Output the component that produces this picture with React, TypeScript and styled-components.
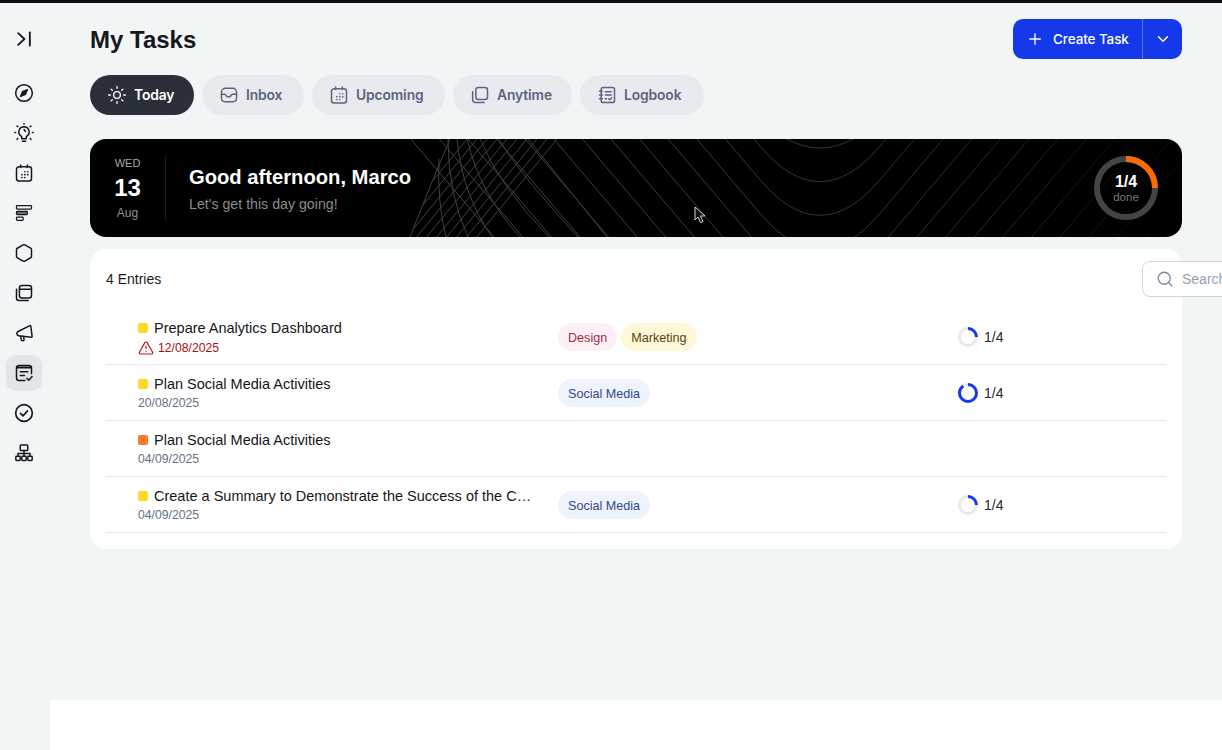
import React from 'react';
import styled, { createGlobalStyle } from 'styled-components';
import { Hexagon, Sun, Plus, ChevronDown, Search, TriangleAlert } from 'lucide-react';

const Global = createGlobalStyle`
  html, body { margin: 0; padding: 0; height: 100%; overflow: hidden; background: #f1f5f6; }
  * { box-sizing: border-box; }
  #root { height: 100%; }
`;

const Shell = styled.div`
  width: 1222px; height: 750px; display: grid; grid-template-columns: 50px 1fr;
  border-top: 3px solid #0b1012; background: #f1f5f6; overflow: hidden;
  font-family: "Liberation Sans", Arial, sans-serif;
`;
const Sidebar = styled.nav`
  display: flex; flex-direction: column; align-items: center; padding: 18px 2px 0 0;
`;
const NavToggle = styled.div`
  width: 36px; height: 36px; display: flex; align-items: center; justify-content: center; color: #15191e; margin-bottom: 18px;
`;
const NavList = styled.div`
  display: flex; flex-direction: column; gap: 4px;
`;
const NavItem = styled.div<{ $active?: boolean }>`
  width: 36px; height: 36px; border-radius: 10px; display: flex; align-items: center; justify-content: center;
  color: #15191e; background: ${p => (p.$active ? '#e2e6e8' : 'transparent')};
`;
const Main = styled.div`
  display: flex; flex-direction: column; min-width: 0;
`;
const Content = styled.main`
  flex: 1; padding: 16px 40px 0; min-height: 0;
`;
const Footer = styled.div`
  height: 50px; background: #ffffff; flex: none;
`;
const Header = styled.header`
  height: 40px; display: flex; align-items: center; justify-content: space-between;
`;
const Title = styled.h1`
  margin: 1px 0 0; font: 700 24px/40px "Liberation Sans", Arial, sans-serif; color: #15171c;
`;
const SplitButton = styled.div`
  display: flex; height: 40px; border-radius: 10px; background: #1438ea; color: #fff; overflow: hidden;
`;
const MainAction = styled.div`
  width: 130px; display: flex; align-items: center; padding-left: 13px; gap: 9px;
  font: 500 13.5px "Inter", sans-serif; letter-spacing: -0.1px; border-right: 1px solid #5a74ee;
`;
const MenuAction = styled.div`
  width: 39px; display: flex; align-items: center; justify-content: center;
`;
const Tabs = styled.div`
  display: flex; gap: 8px; margin-top: 16px;
`;
const Tab = styled.div<{ $active?: boolean; $w: number }>`
  width: ${p => p.$w}px; height: 40px; border-radius: 20px; display: flex; align-items: center; gap: 7px; padding-left: 17px;
  font: 600 13.8px "Inter", sans-serif; letter-spacing: -0.1px;
  background: ${p => (p.$active ? '#2b2f3a' : '#e8eaee')};
  color: ${p => (p.$active ? '#ffffff' : '#5b6480')};
`;
const Banner = styled.section`
  position: relative; margin-top: 24px; height: 98px; border-radius: 16px; background: #000; overflow: hidden;
  display: flex; align-items: center; color: #fff;
`;
const BannerArt = styled.svg`
  position: absolute; inset: 0; width: 1092px; height: 98px;
`;
const DateCol = styled.div`
  position: relative; width: 76px; height: 66px; display: flex; flex-direction: column; align-items: center; justify-content: space-between;
  border-right: 1px solid #1d1d1d; flex: none;
`;
const DateDay = styled.div`
  font-size: 11px; line-height: 16px; color: #a9a9a9;
`;
const DateNum = styled.div`
  font-size: 24px; font-weight: 700; line-height: 26px; color: #fff;
`;
const DateMonth = styled.div`
  font-size: 12px; line-height: 16px; color: #8f8f8f;
`;
const Greeting = styled.div`
  position: relative; margin: 2px 0 0 23px; flex: 1;
`;
const Hello = styled.div`
  font-size: 20.2px; font-weight: 700; line-height: 24px; color: #fff;
`;
const Sub = styled.div`
  margin-top: 6px; font-size: 14.2px; line-height: 18px; color: #8c8c8c;
`;
const DoneRing = styled.div`
  position: relative; width: 64px; height: 64px; margin-right: 24px; flex: none;
`;
const DoneText = styled.div`
  position: absolute; inset: 0; display: flex; flex-direction: column; align-items: center; justify-content: center;
`;
const DoneNum = styled.div`
  font-size: 16px; font-weight: 700; line-height: 18px; color: #fff;
`;
const DoneLabel = styled.div`
  font-size: 11.5px; line-height: 13px; color: #777;
`;
const Pointer = styled.svg`
  position: absolute; left: 604px; top: 67px; width: 13px; height: 18px;
`;
const Card = styled.section`
  margin-top: 12px; height: 300px; border-radius: 16px; background: #fff; padding: 12px 16px 16px;
`;
const Toolbar = styled.div`
  display: grid; grid-template-columns: 1036px 240px; align-items: center; height: 36px; margin-bottom: 12px;
`;
const Count = styled.div`
  font-size: 14px; color: #1a1c20;
`;
const SearchBox = styled.div`
  height: 36px; border: 1px solid #d0d5dd; border-radius: 8px; background: #fff; display: flex; align-items: center;
  gap: 8px; padding-left: 13px; color: #7d879c; font-size: 14px;
`;
const SearchText = styled.span`
  color: #98a2b3;
`;
const Row = styled.div`
  height: 56px; display: grid; grid-template-columns: 420px 400px 1fr; align-items: center; padding-left: 32px;
  border-bottom: 1px solid #e7e9ee;
`;
const TitleCell = styled.div`
  min-width: 0; padding-right: 26px; margin-top: 1px;
`;
const TitleLine = styled.div`
  display: flex; align-items: center; gap: 6px;
`;
const Dot = styled.span<{ $color: string }>`
  width: 10px; height: 10px; border-radius: 2px; background: ${p => p.$color}; flex: none;
`;
const TaskName = styled.div`
  font-size: 14.5px; line-height: 18px; color: #14161a; white-space: nowrap; overflow: hidden; text-overflow: ellipsis; min-width: 0;
`;
const DateLine = styled.div<{ $late?: boolean }>`
  display: flex; align-items: center; gap: 4px; margin-top: ${p => (p.$late ? 3 : 2)}px; font-size: 12.2px; line-height: 16px;
  color: ${p => (p.$late ? '#a80f0f' : '#667085')};
`;
const TagCell = styled.div`
  display: flex; gap: 4px; margin-top: 1px;
`;
const Tag = styled.span<{ $bg: string; $fg: string }>`
  height: 28px; padding: 1px 10px 0; border-radius: 14px; display: flex; align-items: center; font-size: 12.6px;
  background: ${p => p.$bg}; color: ${p => p.$fg};
`;
const ProgressCell = styled.div`
  display: flex; align-items: center; gap: 6px; font-size: 14px; color: #23262b;
`;

const ic = { width: 20, height: 20, viewBox: '0 0 24 24', fill: 'none', stroke: 'currentColor', strokeWidth: 1.8, strokeLinecap: 'round' as const, strokeLinejoin: 'round' as const };

const CollapseIcon = () => <svg {...ic} strokeWidth={2.2}><path d="M5 5l7.5 7L5 19" /><path d="M19 4v16" /></svg>;
const CompassIcon = () => (
  <svg {...ic}>
    <circle cx="12" cy="12" r="10" />
    <path d="M16 8l-2.4 5.6L8 16l2.4-5.6z" fill="currentColor" />
  </svg>
);
const BulbIcon = () => (
  <svg {...ic}>
    <path d="M12 4.5a6.2 6.2 0 0 0-3.5 11.3c.5.4.8 1 .8 1.6V19h5.4v-1.6c0-.6.3-1.2.8-1.6A6.2 6.2 0 0 0 12 4.5z" />
    <path d="M10 21.8h4M12 7.8l1.8 2.4" />
    <path d="M12 1v.6M3.6 3.6l.9.9M20.4 3.6l-.9.9M1 11.5h1M22 11.5h1M3.6 19.4l.9-.9M20.4 19.4l-.9-.9" />
  </svg>
);
const CalendarIcon = () => (
  <svg {...ic}>
    <rect x="3" y="4.5" width="18" height="17" rx="3" />
    <path d="M8 2.5v3M16 2.5v3" />
    <path d="M13 10.5h.01M16.5 10.5h.01M9.5 14h.01M13 14h.01M16.5 14h.01M9.5 17.5h.01M13 17.5h.01" strokeWidth={2} />
  </svg>
);
const BarsIcon = () => (
  <svg {...ic} strokeWidth={1.5}>
    <rect x="3" y="3.2" width="18" height="4" rx="1" />
    <rect x="3" y="10" width="13" height="4" rx="1" fill="#6a6e72" />
    <rect x="3" y="16.8" width="8" height="4" rx="1" />
  </svg>
);
const LayersIcon = () => (
  <svg {...ic}>
    <rect x="6.5" y="3" width="14.5" height="15" rx="3" />
    <path d="M6.5 7.5H21" />
    <path d="M3 7.5V18a3 3 0 0 0 3 3h11" />
  </svg>
);
const MegaphoneIcon = () => (
  <svg {...ic}>
    <path d="M19 3.2L5 10.2a2.7 2.7 0 0 0 .6 5.1l15.2 1.7a.8.8 0 0 0 .9-.9L20.2 3.9a.8.8 0 0 0-1.2-.7z" />
    <path d="M7.8 15.8l1 4.3a1.7 1.7 0 0 0 3.3-.8l-.7-3" />
  </svg>
);
const TaskMsgIcon = () => (
  <svg {...ic}>
    <path d="M21 13V6a3 3 0 0 0-3-3H6a3 3 0 0 0-3 3v12a3 3 0 0 0 3 3h7" />
    <path d="M3.5 5.5h17" strokeWidth={2.4} />
    <path d="M7.5 10.5h9M7.5 15h5" />
    <path d="M15.5 18.5l2.2 2.2 4-4.4" />
  </svg>
);
const CheckCircleIcon = () => (
  <svg {...ic} strokeWidth={2}>
    <circle cx="12" cy="12" r="10" />
    <path d="M7.8 12.4l3 3 5.4-6" />
  </svg>
);
const OrgIcon = () => (
  <svg {...ic}>
    <rect x="7.5" y="2.5" width="9" height="6.5" rx="1" />
    <path d="M12 9v7M4.8 16v-3.4h14.4V16" />
    <rect x="2.2" y="16" width="5.2" height="5" rx="0.8" />
    <rect x="9.4" y="16" width="5.2" height="5" rx="0.8" />
    <rect x="16.6" y="16" width="5.2" height="5" rx="0.8" />
  </svg>
);
const CopyIcon = () => (
  <svg {...ic}>
    <rect x="7" y="3" width="14" height="14.5" rx="3" />
    <path d="M3.2 8v10a3 3 0 0 0 3 3H17" />
  </svg>
);
const InboxIcon = () => (
  <svg {...ic}>
    <path d="M3 13V8.5A4.5 4.5 0 0 1 7.5 4h9A4.5 4.5 0 0 1 21 8.5V16a4 4 0 0 1-4 4H7a4 4 0 0 1-4-4v-3z" />
    <path d="M3 11h3.5a2 2 0 0 1 1.7 1l.6 1a2 2 0 0 0 1.7 1h2a2 2 0 0 0 1.7-1l.6-1a2 2 0 0 1 1.7-1H21" />
  </svg>
);
const LogbookIcon = () => (
  <svg {...ic}>
    <rect x="5" y="3" width="16" height="18" rx="2.5" />
    <path d="M3 7.5h3.5M3 12h3.5M3 16.5h3.5" />
    <path d="M10 8h7M10 12h7M10 16.5h1.5M14 16.5l1.3 1.2 2.2-2.4" />
  </svg>
);

const lineParts = (): string[] => {
  const c = 730, paths: string[] = [];
  paths.push(`M697 0Q730 18 763 0`);
  for (let i = 1; i < 14; i++) {
    const a = 66 + (i - 1) * 28.6;
    const apex = a / 0.85;
    const d = 70;
    const s = apex - d;
    const dx = s * 0.85;
    paths.push(`M${c - a} 0L${c - a + dx} ${s}Q${c} ${apex} ${c + a - dx} ${s}L${c + a} 0`);
  }
  return paths;
};
const leftCurves = [
  'M438 0L517 98', 'M409 0Q427 32 488 98', 'M390 0Q410 48 459 98', 'M377 0Q390 55 430 98', 'M367 0Q372 55 402 98',
  'M358 0Q358 55 378 98', 'M349 20Q347 62 356 98', 'M360 0Q342 42 320 98',
];
const slashLines = [467, 457, 447, 437, 427, 417, 407, 397, 387, 377].map(t => {
  const y = Math.min(98, (t - 360) / 0.41);
  return `M${t} 0L${t - 0.82 * y} ${y}`;
});

const Ring = ({ pct, start = 0 }: { pct: number; start?: number }) => {
  const r = 8.5, c = 2 * Math.PI * r;
  return (
    <svg width="20" height="20" viewBox="0 0 20 20">
      <circle cx="10" cy="10" r={r} fill="none" stroke="#e8eaee" strokeWidth="3" />
      <circle cx="10" cy="10" r={r} fill="none" stroke="#1438ea" strokeWidth="3" strokeDasharray={`${c * pct} ${c}`} transform={`rotate(${start - 90} 10 10)`} />
    </svg>
  );
};

const rows = [
  { color: '#fdd92a', name: 'Prepare Analytics Dashboard', date: '12/08/2025', late: true, tags: [['Design', '#fdf0f4', '#9d2c4a'], ['Marketing', '#fef7d8', '#5a4312']], pct: 0.25, start: 0 },
  { color: '#fdd92a', name: 'Plan Social Media Activities', date: '20/08/2025', tags: [['Social Media', '#eef3fd', '#33488f']], pct: 0.9, start: 0 },
  { color: '#fd7a2a', name: 'Plan Social Media Activities', date: '04/09/2025', tags: [] },
  { color: '#fdd92a', name: 'Create a Summary to Demonstrate the Success of the Campaign', date: '04/09/2025', tags: [['Social Media', '#eef3fd', '#33488f']], pct: 0.25, start: 0 },
];

const tabs: [string, number, React.ReactNode][] = [
  ['Today', 104, <Sun size={20} strokeWidth={1.6} />],
  ['Inbox', 102, <InboxIcon />],
  ['Upcoming', 133, <CalendarIcon />],
  ['Anytime', 119, <CopyIcon />],
  ['Logbook', 124, <LogbookIcon />],
];

export default function App() {
  const navIcons = [
    <CompassIcon />, <BulbIcon />, <CalendarIcon />, <BarsIcon />, <Hexagon size={20} strokeWidth={1.8} />,
    <LayersIcon />, <MegaphoneIcon />, <TaskMsgIcon />, <CheckCircleIcon />, <OrgIcon />,
  ];
  const donePct = 0.25, doneC = 2 * Math.PI * 29;
  return (
    <>
      <Global />
      <Shell>
        <Sidebar>
          <NavToggle><CollapseIcon /></NavToggle>
          <NavList>
            {navIcons.map((icon, i) => <NavItem key={i} $active={i === 7}>{icon}</NavItem>)}
          </NavList>
        </Sidebar>
        <Main>
          <Content>
            <Header>
              <Title>My Tasks</Title>
              <SplitButton>
                <MainAction><Plus size={18} strokeWidth={1.8} />Create Task</MainAction>
                <MenuAction><ChevronDown size={18} strokeWidth={2} /></MenuAction>
              </SplitButton>
            </Header>
            <Tabs>
              {tabs.map(([label, w, icon], i) => <Tab key={label} $w={w} $active={i === 0}>{icon}{label}</Tab>)}
            </Tabs>
            <Banner>
              <BannerArt viewBox="0 0 1092 98" fill="none">
                <defs>
                  <linearGradient id="fade" gradientUnits="userSpaceOnUse" x1="330" y1="0" x2="1040" y2="0">
                    <stop offset="0" stopColor="#414141" />
                    <stop offset="0.6" stopColor="#343434" />
                    <stop offset="0.85" stopColor="#222" />
                    <stop offset="1" stopColor="#0a0a0a" />
                  </linearGradient>
                </defs>
                {[...lineParts(), ...leftCurves, ...slashLines].map((d, i) => <path key={i} d={d} stroke="url(#fade)" strokeWidth="1" />)}
              </BannerArt>
              <DateCol>
                <DateDay>WED</DateDay>
                <DateNum>13</DateNum>
                <DateMonth>Aug</DateMonth>
              </DateCol>
              <Greeting>
                <Hello>Good afternoon, Marco</Hello>
                <Sub>Let's get this day going!</Sub>
              </Greeting>
              <DoneRing>
                <svg width="64" height="64" viewBox="0 0 64 64">
                  <circle cx="32" cy="32" r="29" fill="none" stroke="#444" strokeWidth="6" />
                  <circle cx="32" cy="32" r="29" fill="none" stroke="#ff6a00" strokeWidth="6" strokeDasharray={`${doneC * donePct} ${doneC}`} transform="rotate(-90 32 32)" />
                </svg>
                <DoneText>
                  <DoneNum>1/4</DoneNum>
                  <DoneLabel>done</DoneLabel>
                </DoneText>
              </DoneRing>
              <Pointer viewBox="0 0 13 18">
                <path d="M1 1v13l3-3 2.5 5.5 2.5-1L6.5 10H11z" fill="#111" stroke="#d8d8d8" strokeWidth="1" />
              </Pointer>
            </Banner>
            <Card>
              <Toolbar>
                <Count>4 Entries</Count>
                <SearchBox><Search size={18} strokeWidth={1.7} /><SearchText>Search</SearchText></SearchBox>
              </Toolbar>
              {rows.map((r, i) => (
                <Row key={i}>
                  <TitleCell>
                    <TitleLine><Dot $color={r.color} /><TaskName>{r.name}</TaskName></TitleLine>
                    <DateLine $late={r.late}>
                      {r.late && <TriangleAlert size={16} strokeWidth={1.8} color="#c01818" />}
                      {r.date}
                    </DateLine>
                  </TitleCell>
                  <TagCell>
                    {r.tags.map(([t, bg, fg]) => <Tag key={t} $bg={bg} $fg={fg}>{t}</Tag>)}
                  </TagCell>
                  {r.pct !== undefined && <ProgressCell><Ring pct={r.pct} start={r.start} />1/4</ProgressCell>}
                </Row>
              ))}
            </Card>
          </Content>
          <Footer />
        </Main>
      </Shell>
    </>
  );
}
